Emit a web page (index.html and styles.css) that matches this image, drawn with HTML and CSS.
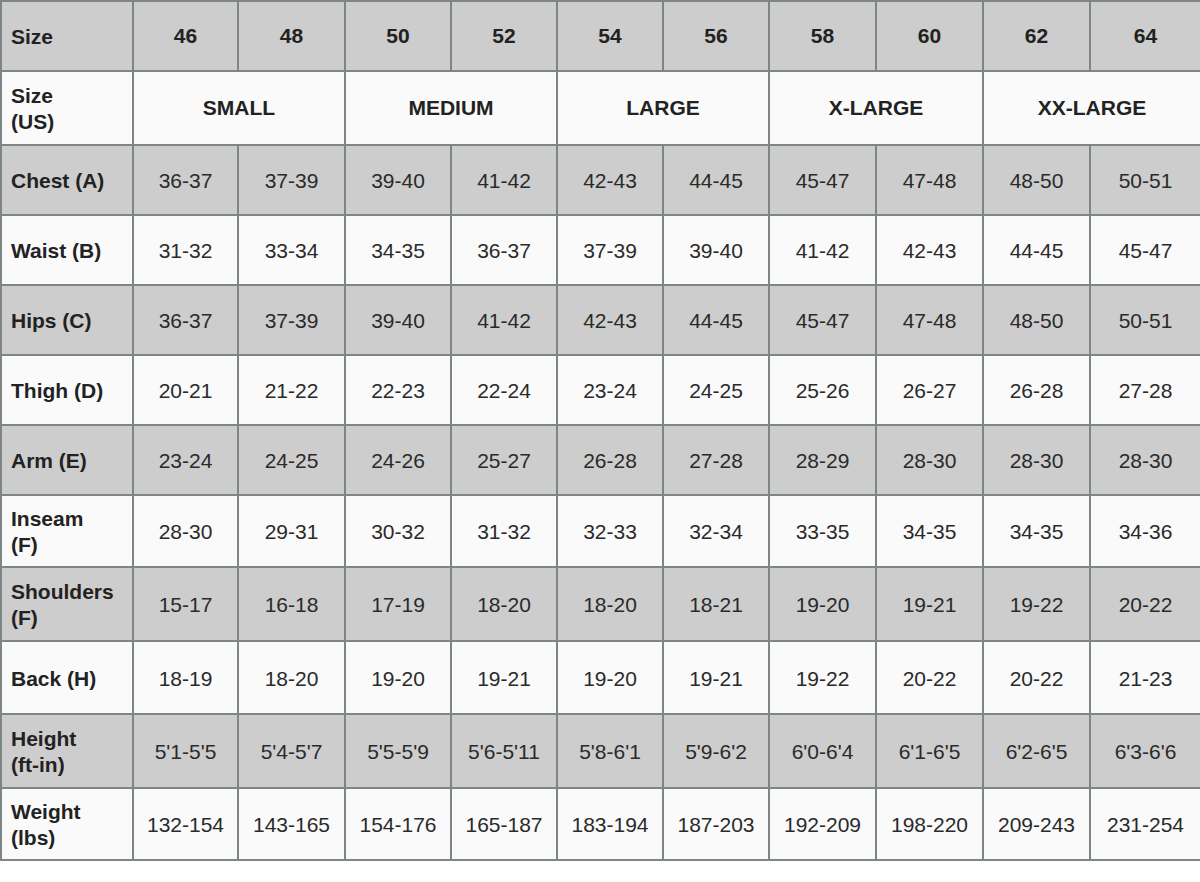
FILE: index.html
```html
<!DOCTYPE html>
<html lang="en">
<head>
<meta charset="utf-8">
<title>Size Chart</title>
<link rel="stylesheet" href="styles.css">
</head>
<body>
<div class="chart">
  <div class="c g lbl">Size</div>
  <div class="c g num">46</div><div class="c g num">48</div><div class="c g num">50</div><div class="c g num">52</div><div class="c g num">54</div><div class="c g num">56</div><div class="c g num">58</div><div class="c g num">60</div><div class="c g num">62</div><div class="c g num">64</div>

  <div class="c w lbl">Size<br>(US)</div>
  <div class="c w num span2">SMALL</div><div class="c w num span2">MEDIUM</div><div class="c w num span2">LARGE</div><div class="c w num span2">X-LARGE</div><div class="c w num span2">XX-LARGE</div>

  <div class="c g lbl">Chest (A)</div>
  <div class="c g val">36-37</div><div class="c g val">37-39</div><div class="c g val">39-40</div><div class="c g val">41-42</div><div class="c g val">42-43</div><div class="c g val">44-45</div><div class="c g val">45-47</div><div class="c g val">47-48</div><div class="c g val">48-50</div><div class="c g val">50-51</div>

  <div class="c w lbl">Waist (B)</div>
  <div class="c w val">31-32</div><div class="c w val">33-34</div><div class="c w val">34-35</div><div class="c w val">36-37</div><div class="c w val">37-39</div><div class="c w val">39-40</div><div class="c w val">41-42</div><div class="c w val">42-43</div><div class="c w val">44-45</div><div class="c w val">45-47</div>

  <div class="c g lbl">Hips (C)</div>
  <div class="c g val">36-37</div><div class="c g val">37-39</div><div class="c g val">39-40</div><div class="c g val">41-42</div><div class="c g val">42-43</div><div class="c g val">44-45</div><div class="c g val">45-47</div><div class="c g val">47-48</div><div class="c g val">48-50</div><div class="c g val">50-51</div>

  <div class="c w lbl">Thigh (D)</div>
  <div class="c w val">20-21</div><div class="c w val">21-22</div><div class="c w val">22-23</div><div class="c w val">22-24</div><div class="c w val">23-24</div><div class="c w val">24-25</div><div class="c w val">25-26</div><div class="c w val">26-27</div><div class="c w val">26-28</div><div class="c w val">27-28</div>

  <div class="c g lbl">Arm (E)</div>
  <div class="c g val">23-24</div><div class="c g val">24-25</div><div class="c g val">24-26</div><div class="c g val">25-27</div><div class="c g val">26-28</div><div class="c g val">27-28</div><div class="c g val">28-29</div><div class="c g val">28-30</div><div class="c g val">28-30</div><div class="c g val">28-30</div>

  <div class="c w lbl">Inseam<br>(F)</div>
  <div class="c w val">28-30</div><div class="c w val">29-31</div><div class="c w val">30-32</div><div class="c w val">31-32</div><div class="c w val">32-33</div><div class="c w val">32-34</div><div class="c w val">33-35</div><div class="c w val">34-35</div><div class="c w val">34-35</div><div class="c w val">34-36</div>

  <div class="c g lbl">Shoulders<br>(F)</div>
  <div class="c g val">15-17</div><div class="c g val">16-18</div><div class="c g val">17-19</div><div class="c g val">18-20</div><div class="c g val">18-20</div><div class="c g val">18-21</div><div class="c g val">19-20</div><div class="c g val">19-21</div><div class="c g val">19-22</div><div class="c g val">20-22</div>

  <div class="c w lbl">Back (H)</div>
  <div class="c w val">18-19</div><div class="c w val">18-20</div><div class="c w val">19-20</div><div class="c w val">19-21</div><div class="c w val">19-20</div><div class="c w val">19-21</div><div class="c w val">19-22</div><div class="c w val">20-22</div><div class="c w val">20-22</div><div class="c w val">21-23</div>

  <div class="c g lbl">Height<br>(ft-in)</div>
  <div class="c g val">5'1-5'5</div><div class="c g val">5'4-5'7</div><div class="c g val">5'5-5'9</div><div class="c g val">5'6-5'11</div><div class="c g val">5'8-6'1</div><div class="c g val">5'9-6'2</div><div class="c g val">6'0-6'4</div><div class="c g val">6'1-6'5</div><div class="c g val">6'2-6'5</div><div class="c g val">6'3-6'6</div>

  <div class="c w lbl">Weight<br>(lbs)</div>
  <div class="c w val">132-154</div><div class="c w val">143-165</div><div class="c w val">154-176</div><div class="c w val">165-187</div><div class="c w val">183-194</div><div class="c w val">187-203</div><div class="c w val">192-209</div><div class="c w val">198-220</div><div class="c w val">209-243</div><div class="c w val">231-254</div>
</div>
</body>
</html>
```
FILE: styles.css
```css
html, body {
  margin: 0;
  padding: 0;
  background: #ffffff;
}
body {
  font-family: "Liberation Sans", Arial, sans-serif;
  color: #222222;
  overflow: hidden;
}
.chart {
  display: grid;
  width: 1202px;
  box-sizing: border-box;
  padding: 2px;
  gap: 2px;
  background: #7e8585;
  grid-template-columns: 130px 103px 105px 104px 104px 104px 104px 105px 105px 105px 109px;
  grid-template-rows: 68px 72px 68px 68px 68px 68px 68px 70px 72px 71px 72px 70px;
}
.c {
  display: flex;
  align-items: center;
  font-size: 21px;
  line-height: 26px;
}
.g { background: #cdcdcd; }
.w { background: #fafafa; }
.lbl {
  font-weight: bold;
  padding-left: 9px;
  padding-top: 2px;
}
.num {
  font-weight: bold;
  justify-content: center;
}
.val {
  justify-content: center;
  color: #2a2a2a;
  padding-top: 2px;
}
.span2 { grid-column: span 2; }
```
